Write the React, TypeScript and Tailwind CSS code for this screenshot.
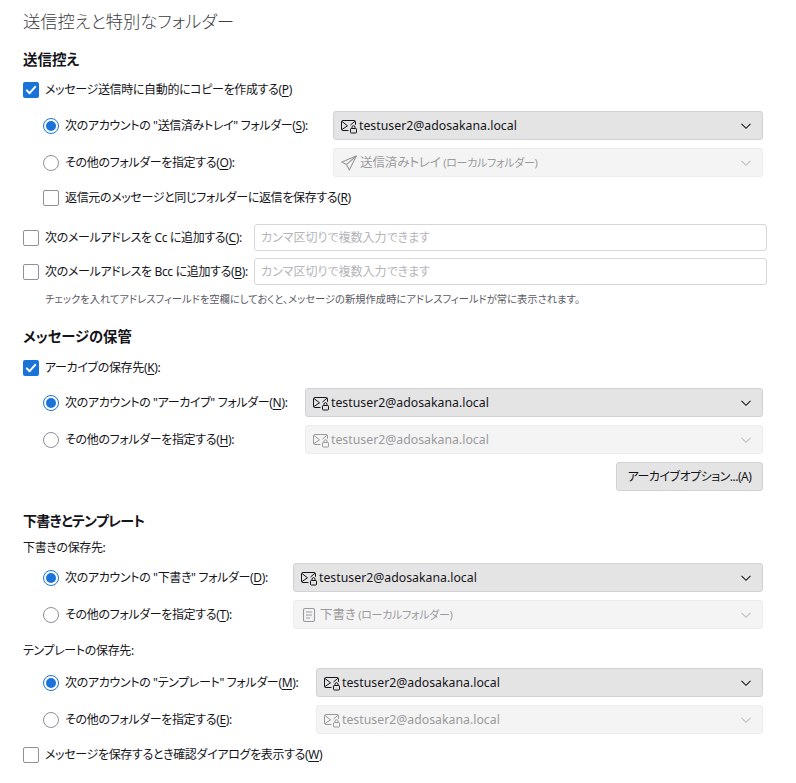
import React from "react";

function L({ t, k, after = "" }: { t: string; k: string; after?: string }) {
  return (
    <span className="whitespace-nowrap">
      {t}(<span className="underline underline-offset-2">{k}</span>){after}
    </span>
  );
}

function Check({ on }: { on?: boolean }) {
  return on ? (
    <span className="w-4 h-4 shrink-0 rounded-[2px] bg-[#1a73d9] flex items-center justify-center">
      <svg width="12" height="12" viewBox="0 0 12 12" fill="none">
        <path d="M1.8 6.4 4.6 9.2 10.2 2.8" stroke="#fff" strokeWidth="2" strokeLinecap="round" strokeLinejoin="round" />
      </svg>
    </span>
  ) : (
    <span className="w-4 h-4 shrink-0 rounded-[2px] border border-[#8f8f9d] bg-white" />
  );
}

function Radio({ on }: { on?: boolean }) {
  return on ? (
    <span className="w-4 h-4 shrink-0 rounded-full border-[1.5px] border-[#1a73d9] bg-white flex items-center justify-center">
      <span className="w-[10px] h-[10px] rounded-full bg-[#1a73d9]" />
    </span>
  ) : (
    <span className="w-4 h-4 shrink-0 rounded-full border border-[#8f8f9d] bg-white" />
  );
}

function AccountIcon() {
  return (
    <svg width="16" height="16" viewBox="0 0 16 16" fill="none" stroke="currentColor" strokeWidth="1" className="shrink-0">
      <path d="M7.5 12.5H1.8A1.3 1.3 0 0 1 .5 11.2V3.8A1.3 1.3 0 0 1 1.8 2.5h11.4a1.3 1.3 0 0 1 1.3 1.3v3" />
      <path d="M1 3.5 6.5 7.8 1 11.5" />
      <path d="M14 3.2 9.5 7" />
      <rect x="9.5" y="10.5" width="6" height="4.5" rx="0.7" />
      <path d="M11 10.5V9.2a1.5 1.5 0 0 1 3 0v1.3" />
    </svg>
  );
}

function SentIcon() {
  return (
    <svg width="16" height="16" viewBox="0 0 16 16" fill="none" stroke="currentColor" strokeWidth="1.1" strokeLinejoin="round" className="shrink-0">
      <path d="M15.3 1 .8 7l4.6 2.6L8.3 15 15.3 1Z" />
      <path d="M15.3 1 5.4 9.6" />
    </svg>
  );
}

function DraftIcon() {
  return (
    <svg width="16" height="16" viewBox="0 0 16 16" fill="none" stroke="currentColor" strokeWidth="1.1" className="shrink-0">
      <rect x="2.5" y="1.5" width="11" height="13" rx="1.5" />
      <path d="M5 5h6M5 8h6M5 11h4" />
    </svg>
  );
}

function Select({ text, icon, disabled, local }: { text: string; icon: React.ReactNode; disabled?: boolean; local?: string }) {
  return (
    <div
      className={
        "flex-1 min-w-0 h-[29px] rounded-[3px] border flex items-center pl-[7px] pr-[10px] gap-[2px] " +
        (disabled
          ? "bg-[#f4f4f4] border-[#ececec] text-[#9a9a9d]"
          : "bg-[#e4e4e4] border-[#d2d2d6] text-[#15141a]")
      }
    >
      {icon}
      <span className={"flex-1 whitespace-nowrap " + (local ? "pl-px text-[12.5px] tracking-[-0.1px]" : "text-[12.3px] tracking-normal")}>
        {text}
        {local && <span className="text-[11px] tracking-[-0.3px]"> {local}</span>}
      </span>
      <svg width="12" height="12" viewBox="0 0 12 12" fill="none" stroke="currentColor" strokeWidth="1.1" className={disabled ? "opacity-60" : ""}>
        <path d="M1.5 3.8 6 8.3l4.5-4.5" />
      </svg>
    </div>
  );
}

function RadioRow({ on, label, w, children, mt }: { on?: boolean; label: React.ReactNode; w: string; children: React.ReactNode; mt: string }) {
  return (
    <div className={"flex items-center ml-5 mr-1 " + mt}>
      <Radio on={on} />
      <span className={"pl-[6px] shrink-0 " + w}>{label}</span>
      {children}
    </div>
  );
}

function CheckRow({ on, children, cls }: { on?: boolean; children: React.ReactNode; cls: string }) {
  return (
    <div className={"flex items-center h-5 " + cls}>
      <Check on={on} />
      <span className="pl-[6px]">{children}</span>
    </div>
  );
}

function H({ children, cls }: { children: React.ReactNode; cls: string }) {
  return <h2 className={"h-5 leading-5 font-bold " + cls}>{children}</h2>;
}

function AddrRow({ label, mt, w }: { label: React.ReactNode; mt: string; w: string }) {
  return (
    <div className={"flex items-center " + mt}>
      <Check />
      <span className={"pl-[6px] shrink-0 " + w}>{label}</span>
      <div className="flex-1 h-[27px] rounded-[3px] border border-[#d7d7db] bg-white flex items-center px-[6px] text-[12px] tracking-normal text-[#b5b5b9]">
        カンマ区切りで複数入力できます
      </div>
    </div>
  );
}

const Acc = ({ disabled }: { disabled?: boolean }) => (
  <Select text="testuser2@adosakana.local" icon={<AccountIcon />} disabled={disabled} />
);

export default function App() {
  return (
    <div
      className="w-[796px] h-[783px] overflow-hidden bg-white text-[#15141a] text-[12px] tracking-[-0.35px] leading-5 pl-[23px] pr-[29px] pt-[10px] [font-feature-settings:'palt']"
      style={{ fontFamily: '"Noto Sans", "Noto Sans CJK JP", sans-serif' }}
    >
      <h1 className="h-6 leading-6 text-[17.3px] tracking-normal font-light text-[#3d3d42]">送信控えと特別なフォルダー</h1>

      <H cls="mt-[15px] text-[14.5px] tracking-normal">送信控え</H>
      <CheckRow on cls="mt-[11px]"><L t="メッセージ送信時に自動的にコピーを作成する" k="P" /></CheckRow>
      <RadioRow on mt="mt-[11px]" w="w-[274px]" label={<L t={'次のアカウントの "送信済みトレイ" フォルダー'} k="S" after=":" />}>
        <Acc />
      </RadioRow>
      <RadioRow mt="mt-2" w="w-[274px]" label={<L t="その他のフォルダーを指定する" k="O" after=":" />}>
        <Select text="送信済みトレイ" local="(ローカルフォルダー)" icon={<SentIcon />} disabled />
      </RadioRow>
      <div className="mt-[11px] ml-5">
        <CheckRow cls=""><L t="返信元のメッセージと同じフォルダーに返信を保存する" k="R" /></CheckRow>
      </div>

      <AddrRow mt="mt-4" w="w-[215px]" label={<L t="次のメールアドレスを Cc に追加する" k="C" after=":" />} />
      <AddrRow mt="mt-[7px]" w="w-[215px]" label={<L t="次のメールアドレスを Bcc に追加する" k="B" after=":" />} />
      <p className="mt-[6px] h-4 leading-4 pl-[22px] text-[10.3px] tracking-normal text-[#5b5b66] whitespace-nowrap">
        チェックを入れてアドレスフィールドを空欄にしておくと、メッセージの新規作成時にアドレスフィールドが常に表示されます。
      </p>

      <H cls="mt-5 text-[14.3px] tracking-normal">メッセージの保管</H>
      <CheckRow on cls="mt-[11px]"><L t="アーカイブの保存先" k="K" after=":" /></CheckRow>
      <RadioRow on mt="mt-[10px]" w="w-[246px]" label={<L t={'次のアカウントの "アーカイブ" フォルダー'} k="N" after=":" />}>
        <Acc />
      </RadioRow>
      <RadioRow mt="mt-2" w="w-[246px]" label={<L t="その他のフォルダーを指定する" k="H" after=":" />}>
        <Acc disabled />
      </RadioRow>
      <div className="mt-2 mr-1 flex justify-end">
        <button className="w-[147px] h-[29px] rounded-[3px] border border-[#d2d2d6] bg-[#e4e4e4] tracking-[-0.5px] whitespace-nowrap">
          アーカイブオプション...(A)
        </button>
      </div>

      <H cls="mt-5 text-[14px] tracking-[-0.7px]">下書きとテンプレート</H>
      <p className="mt-[7px] h-5">下書きの保存先:</p>
      <RadioRow on mt="mt-[5px]" w="w-[234px]" label={<L t={'次のアカウントの "下書き" フォルダー'} k="D" after=":" />}>
        <Acc />
      </RadioRow>
      <RadioRow mt="mt-2" w="w-[234px]" label={<L t="その他のフォルダーを指定する" k="T" after=":" />}>
        <Select text="下書き" local="(ローカルフォルダー)" icon={<DraftIcon />} disabled />
      </RadioRow>
      <p className="mt-3 h-5">テンプレートの保存先:</p>
      <RadioRow on mt="mt-[7px]" w="w-[257px]" label={<L t={'次のアカウントの "テンプレート" フォルダー'} k="M" after=":" />}>
        <Acc />
      </RadioRow>
      <RadioRow mt="mt-2" w="w-[257px]" label={<L t="その他のフォルダーを指定する" k="E" after=":" />}>
        <Acc disabled />
      </RadioRow>
      <CheckRow cls="mt-[11px]"><L t="メッセージを保存するとき確認ダイアログを表示する" k="W" /></CheckRow>
    </div>
  );
}
